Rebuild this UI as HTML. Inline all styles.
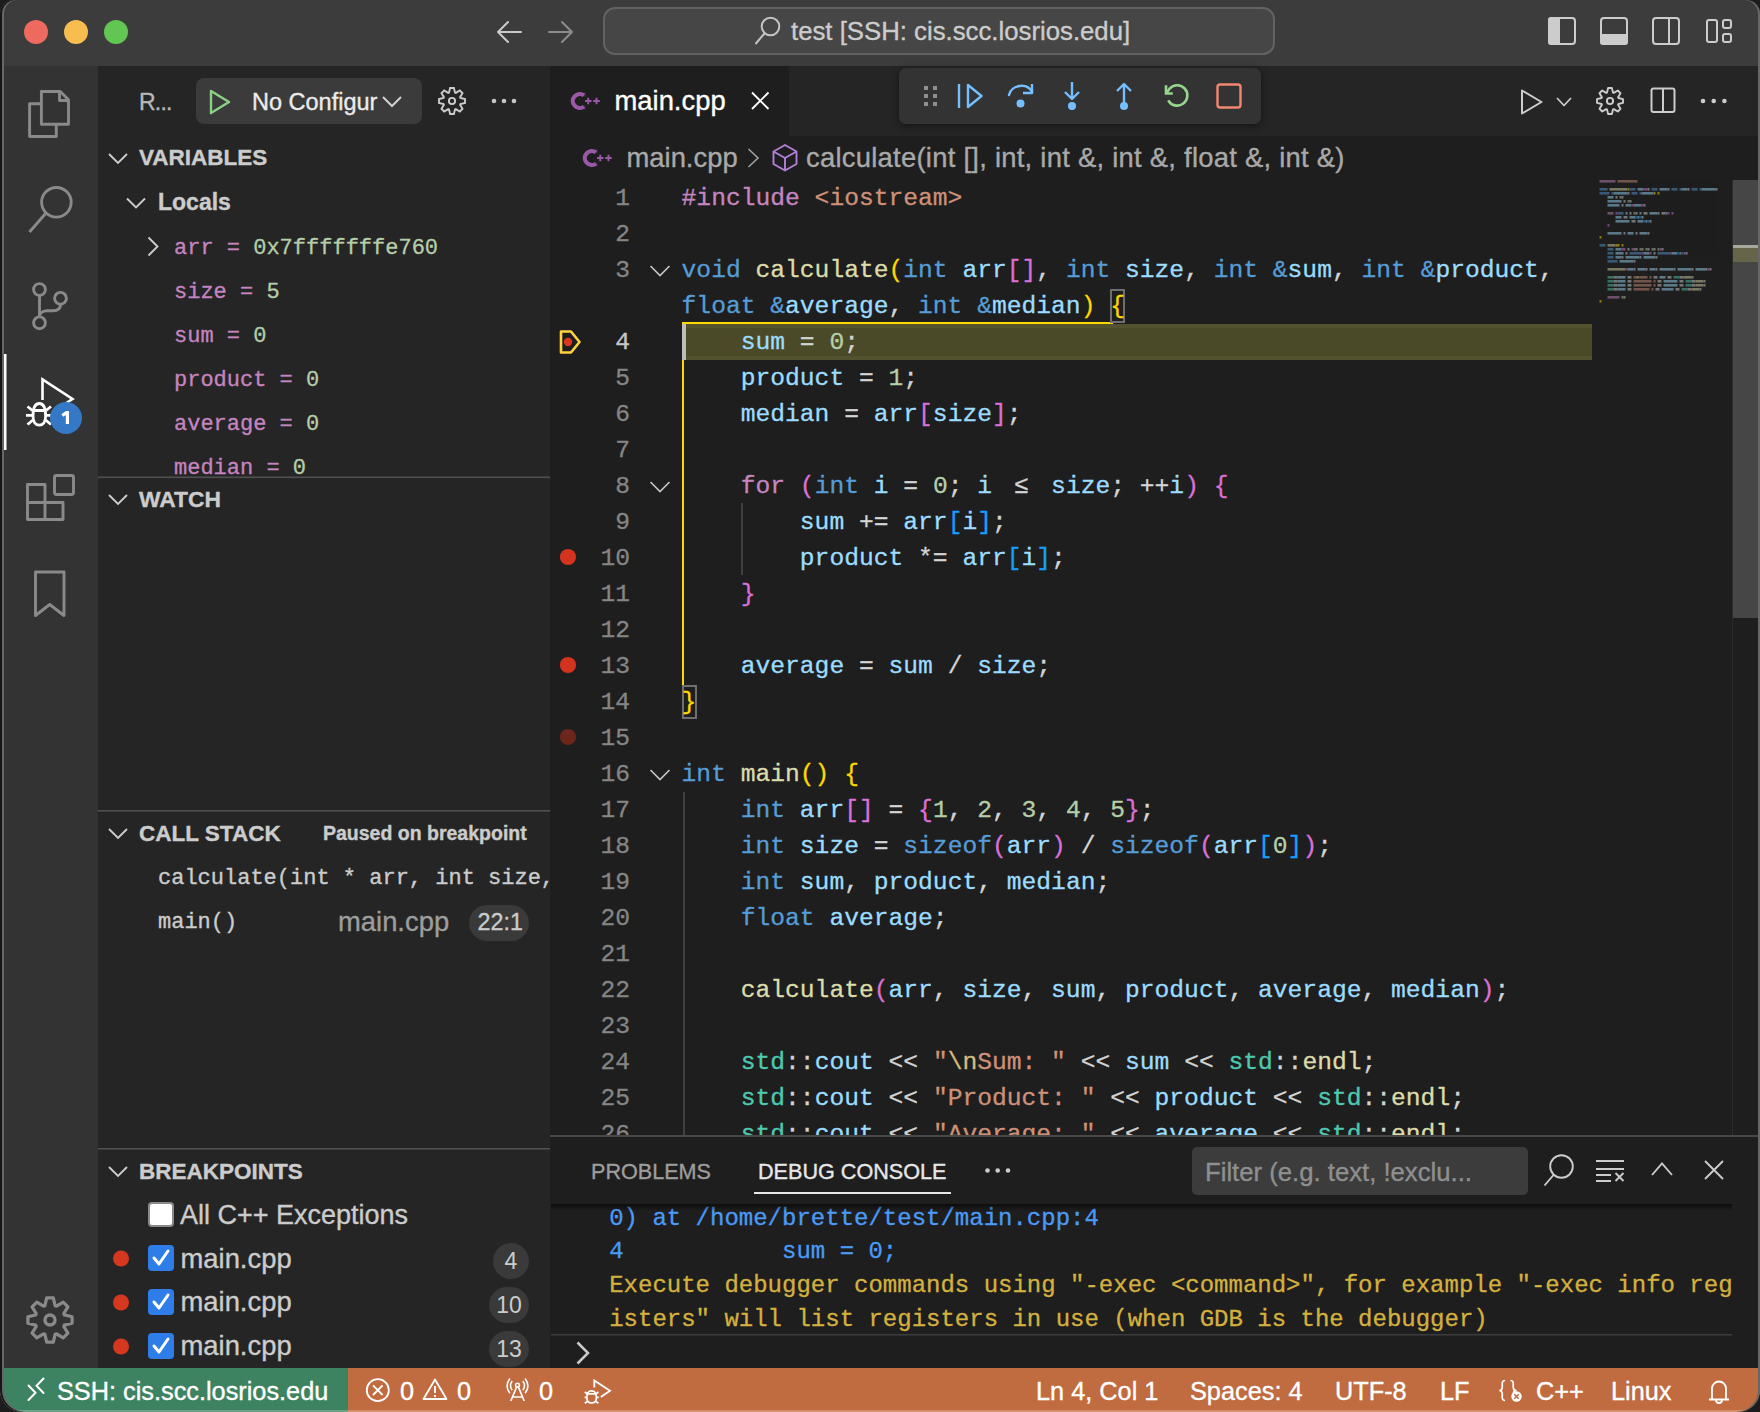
<!DOCTYPE html>
<html><head><meta charset="utf-8">
<style>
*{margin:0;padding:0;box-sizing:border-box}
html,body{width:1760px;height:1412px;overflow:hidden;background:#1c1c1c}
body{position:relative;font-family:"Liberation Sans",sans-serif;color:#cccccc}
.win{position:absolute;left:0;top:0;width:1760px;height:1412px;overflow:hidden;border-radius:14px 14px 22px 22px}
.a{position:absolute}
.mono{font-family:"Liberation Mono",monospace}
.t{position:absolute;white-space:pre;-webkit-text-stroke:0.35px currentColor}
pre{-webkit-text-stroke:0.3px currentColor}
svg{position:absolute;overflow:visible}
.code .k{color:#c586c0}.code .s{color:#ce9178}.code .ty{color:#569cd6}.code .f{color:#dcdcaa}.code .v{color:#9cdcfe}.code .n{color:#b5cea8}.code .b1{color:#ffd700}.code .b2{color:#da70d6}.code .b3{color:#179fff}.code .ns{color:#4ec9b0}.code .e{color:#d7ba7d}
.code .le{display:inline-block;width:29.56px;text-align:center}
#titlebar{left:0;top:0;width:1760px;height:66px;background:#3c3c3c}
#actbar{left:0;top:66px;width:98px;height:1302px;background:#333333}
#sidebar{left:98px;top:66px;width:452px;height:1302px;background:#252526}
#editor{left:550px;top:66px;width:1210px;height:1302px;background:#1e1e1e}
#tabs{left:550px;top:66px;width:1210px;height:70px;background:#252526}
#status{left:0;top:1368px;width:1760px;height:44px;background:#c06b40}
#remote{left:0;top:1368px;width:348px;height:44px;background:#3d8362}
.frame{position:absolute;left:0;top:0;width:1760px;height:1412px;border-radius:14px 14px 22px 22px;pointer-events:none;box-shadow:inset 2px 0 0 #161616, inset 4px 0 0 #676767, inset -2px 0 0 #676767}
</style></head>
<body>
<div class="win">
  <div id="titlebar" class="a">
    <div class="a" style="left:24px;top:20px;width:24px;height:24px;border-radius:50%;background:#ee6a5f"></div>
    <div class="a" style="left:64px;top:20px;width:24px;height:24px;border-radius:50%;background:#f5be4f"></div>
    <div class="a" style="left:104px;top:20px;width:24px;height:24px;border-radius:50%;background:#62c554"></div>
    <svg style="left:0;top:0" width="1760" height="66">
      <g fill="none" stroke-width="2" stroke-linecap="round" stroke-linejoin="round">
        <path d="M498 32 H521 M508 22 L498 32 L508 42" stroke="#c9c9c9"/>
        <path d="M549 32 H572 M562 22 L572 32 L562 42" stroke="#8c8c8c"/>
      </g>
      <rect x="604" y="8" width="670" height="46" rx="11" fill="#464646" stroke="#626262" stroke-width="2"/>
      <g fill="none" stroke="#c4c4c4" stroke-width="2">
        <circle cx="770.5" cy="26.5" r="8.8"/>
        <path d="M764.5 33.5 L755.5 44"/>
      </g>
      <g fill="none" stroke="#cccccc" stroke-width="2">
        <rect x="1549" y="18" width="26" height="26" rx="3"/>
        <rect x="1601" y="18" width="26" height="26" rx="3"/>
        <rect x="1653" y="18" width="26" height="26" rx="3"/>
        <path d="M1669 18 V44"/>
        <rect x="1707" y="20" width="10" height="22" rx="2"/>
        <rect x="1723" y="20" width="8" height="8" rx="2"/>
        <rect x="1723" y="34" width="8" height="8" rx="2"/>
      </g>
      <g fill="#cccccc">
        <path d="M1548 20 a3 3 0 0 1 3 -3 h9 v28 h-9 a3 3 0 0 1 -3 -3z"/>
        <path d="M1600 34 h28 v8 a3 3 0 0 1 -3 3 h-22 a3 3 0 0 1 -3 -3z"/>
      </g>
    </svg>
    <div class="t" style="left:791px;top:13.4px;font-size:25.75px;line-height:36px;color:#cccccc">test [SSH: cis.scc.losrios.edu]</div>
  </div>
  <div id="actbar" class="a"></div>
  <svg style="left:0;top:0" width="98" height="1368">
    <g fill="none" stroke="#8a8a8a" stroke-width="2.9" stroke-linejoin="round">
      <!-- explorer -->
      <path d="M41.4 91.5 H60.3 L68.5 99.7 V124.3 H41.4 Z"/>
      <path d="M59.5 91.5 V100.5 H68.5"/>
      <path d="M41.4 103.8 H29.6 V136.5 H56.3 V124.3"/>
      <!-- search -->
      <circle cx="56.4" cy="202.3" r="14.8"/>
      <path d="M46 213 L29.5 232" stroke-linecap="butt"/>
      <!-- source control -->
      <circle cx="39.5" cy="289.5" r="5.9"/>
      <circle cx="39.5" cy="322.8" r="5.9"/>
      <circle cx="60.5" cy="298.3" r="5.9"/>
      <path d="M39.5 295.5 V316.8"/>
      <path d="M60.5 304.2 C60.5 309 57 310.8 53 310.8 H47 C43 310.8 39.5 313 39.5 316.8"/>
      <!-- extensions -->
      <path d="M27.5 484.5 H45 V502.5 H63 V519.5 H27.5 Z M27.5 502.5 H45 V519.5"/>
      <rect x="54.5" y="475.5" width="19" height="19" rx="2"/>
      <!-- bookmark -->
      <path d="M35.5 572 H64 V615.5 L49.7 604.5 L35.5 615.5 Z"/>
      <!-- gear -->
      <path d="M44.9 1305.7 L46.7 1297.9 L53.3 1297.9 L55.1 1305.7 L56.5 1306.2 L63.2 1302.1 L67.9 1306.8 L63.8 1313.5 L64.3 1314.9 L72.1 1316.7 L72.1 1323.3 L64.3 1325.1 L63.8 1326.5 L67.9 1333.2 L63.2 1337.9 L56.5 1333.8 L55.1 1334.3 L53.3 1342.1 L46.7 1342.1 L44.9 1334.3 L43.5 1333.8 L36.8 1337.9 L32.1 1333.2 L36.2 1326.5 L35.7 1325.1 L27.9 1323.3 L27.9 1316.7 L35.7 1314.9 L36.2 1313.5 L32.1 1306.8 L36.8 1302.1 L43.5 1306.2 Z" stroke-width="3.2"/>
      <circle cx="50" cy="1320" r="5" stroke-width="3.4"/>
    </g>
    <!-- active indicator -->
    <rect x="3" y="354" width="3.5" height="96" fill="#ffffff"/>
    <!-- run & debug -->
    <g fill="none" stroke="#ffffff" stroke-width="2.6" stroke-linejoin="miter">
      <path d="M42.5 400 V379.5 L72.5 399 L60 407"/>
    </g>
    <g fill="none" stroke="#ffffff" stroke-width="2.8">
      <path d="M33 416 C33 408 35 403.5 39.3 403.5 C43.6 403.5 45.6 408 45.6 416 C45.6 422 43 425.2 39.3 425.2 C35.6 425.2 33 422 33 416 Z"/>
      <path d="M33 410.5 H45.6 M26 415.3 H32 M46.5 415.3 H51 M27.5 406.5 L32.5 410.5 M51 406.5 L46 410.5 M27.5 424.5 L33 420 M51 424.5 L45.6 420"/>
    </g>
    <circle cx="66" cy="418" r="16" fill="#3478c6"/>
    <path d="M62.3 415.5 L66.5 412.6 H67.4 V424" fill="none" stroke="#ffffff" stroke-width="3.2" stroke-linejoin="miter"/>
  </svg>
  <div id="sidebar" class="a"></div>
  <div id="sb" class="a" style="left:0;top:0;width:550px;height:1368px;overflow:hidden">
    <div class="t" style="left:139px;top:84.5px;font-size:23px;letter-spacing:-0.8px;line-height:34px;color:#b8b8b8">R...</div>
    <div class="a" style="left:196px;top:78px;width:226px;height:46px;border-radius:8px;background:#3b3b3b"></div>
    <div class="t" style="left:252px;top:84.9px;font-size:23.5px;line-height:34px;color:#ececec">No Configur</div>
    <svg style="left:0;top:0" width="550" height="1368">
      <path d="M211 91 L229 102 L211 113 Z" fill="none" stroke="#89d185" stroke-width="2.4" stroke-linejoin="round"/>
      <path d="M383 97 L392 106 L401 97" fill="none" stroke="#d0d0d0" stroke-width="2"/>
      <path d="M449.0 92.6 L450.1 88.0 L453.9 88.0 L455.0 92.6 L455.8 92.9 L459.8 90.5 L462.5 93.2 L460.1 97.2 L460.4 98.0 L465.0 99.1 L465.0 102.9 L460.4 104.0 L460.1 104.8 L462.5 108.8 L459.8 111.5 L455.8 109.1 L455.0 109.4 L453.9 114.0 L450.1 114.0 L449.0 109.4 L448.2 109.1 L444.2 111.5 L441.5 108.8 L443.9 104.8 L443.6 104.0 L439.0 102.9 L439.0 99.1 L443.6 98.0 L443.9 97.2 L441.5 93.2 L444.2 90.5 L448.2 92.9 Z" fill="none" stroke="#cccccc" stroke-width="1.9"/>
      <circle cx="452" cy="101" r="3.1" fill="none" stroke="#cccccc" stroke-width="1.9"/>
      <g fill="#c5c5c5"><circle cx="494" cy="101" r="2.3"/><circle cx="504" cy="101" r="2.3"/><circle cx="514" cy="101" r="2.3"/></g>
      <g fill="none" stroke="#cccccc" stroke-width="1.9">
        <path d="M109 154 L118 163 L127 154"/>
        <path d="M127 198.5 L136 207.5 L145 198.5"/>
        <path d="M148.5 237.5 L157.5 246.5 L148.5 255.5"/>
        <path d="M109 495 L118 504 L127 495"/>
        <path d="M109 829 L118 838 L127 829"/>
        <path d="M109 1167 L118 1176 L127 1167"/>
      </g>
      <g fill="#505050">
        <rect x="98" y="476.5" width="452" height="1.6"/>
        <rect x="98" y="810" width="452" height="1.6"/>
        <rect x="98" y="1148" width="452" height="1.6"/>
      </g>
      <g fill="#d6371f">
        <circle cx="121" cy="1258.5" r="8"/>
        <circle cx="121" cy="1302.5" r="8"/>
        <circle cx="121" cy="1346.5" r="8"/>
      </g>
    </svg>
    <div class="t" style="left:139px;top:142.4px;font-size:22.5px;line-height:32px;font-weight:bold;color:#cccccc">VARIABLES</div>
    <div class="t" style="left:158px;top:186.0px;font-size:23px;line-height:32px;font-weight:bold;color:#cccccc">Locals</div>
    <div class="mono" style="-webkit-text-stroke:0.3px currentColor;position:absolute;left:174px;top:227px;height:250px;overflow:hidden;font-size:22px;line-height:44px;white-space:pre;color:#c586c0"><span>arr = <span style="color:#b5cea8">0x7fffffffe760</span></span>
size = <span style="color:#b5cea8">5</span>
sum = <span style="color:#b5cea8">0</span>
product = <span style="color:#b5cea8">0</span>
average = <span style="color:#b5cea8">0</span>
median = <span style="color:#b5cea8">0</span></div>
    <div class="t" style="left:139px;top:483.1px;font-size:22.8px;line-height:32px;font-weight:bold;color:#cccccc">WATCH</div>
    <div class="t" style="left:139px;top:817.7px;font-size:22.5px;line-height:32px;font-weight:bold;color:#cccccc">CALL STACK</div>
    <div class="t" style="left:323px;top:819.2px;font-size:19.5px;line-height:28px;font-weight:bold;color:#cccccc">Paused on breakpoint</div>
    <div class="t mono" style="left:158px;top:857px;font-size:22px;line-height:44px;color:#cccccc">calculate(int * arr, int size, int &amp; sum</div>
    <div class="t mono" style="left:158px;top:900.5px;font-size:22px;line-height:44px;color:#cccccc">main()</div>
    <div class="t" style="left:338px;top:904.6px;font-size:27.4px;line-height:34px;color:#9d9d9d">main.cpp</div>
    <div class="a" style="left:469px;top:905px;width:60px;height:36px;border-radius:18px;background:#3a3a3a"></div>
    <div class="t" style="left:477.5px;top:905.1px;font-size:23.3px;line-height:34px;color:#cccccc">22:1</div>
    <div class="t" style="left:139px;top:1155.7px;font-size:22.5px;line-height:32px;font-weight:bold;color:#cccccc">BREAKPOINTS</div>
    <div class="a" style="left:148px;top:1202px;width:26px;height:25px;border-radius:4px;background:#ffffff;border:2px solid #8a8a8a"></div>
    <div class="t" style="left:180px;top:1198.0px;font-size:27px;line-height:34px;color:#cccccc">All C++ Exceptions</div>
    <div class="a" style="left:148px;top:1245px;width:26px;height:26px;border-radius:4px;background:#2f7de8"></div>
    <div class="a" style="left:148px;top:1289px;width:26px;height:26px;border-radius:4px;background:#2f7de8"></div>
    <div class="a" style="left:148px;top:1333px;width:26px;height:26px;border-radius:4px;background:#2f7de8"></div>
    <svg style="left:0;top:0" width="550" height="1368">
      <g fill="none" stroke="#ffffff" stroke-width="3" stroke-linecap="round" stroke-linejoin="round">
        <path d="M154 1258 L159 1264 L168 1251"/>
        <path d="M154 1302 L159 1308 L168 1295"/>
        <path d="M154 1346 L159 1352 L168 1339"/>
      </g>
    </svg>
    <div class="t" style="left:180.5px;top:1241.5px;font-size:27.4px;line-height:34px;color:#cccccc">main.cpp</div>
    <div class="t" style="left:180.5px;top:1285.4px;font-size:27.4px;line-height:34px;color:#cccccc">main.cpp</div>
    <div class="t" style="left:180.5px;top:1328.9px;font-size:27.4px;line-height:34px;color:#cccccc">main.cpp</div>
    <div class="a" style="left:493px;top:1243px;width:36px;height:36px;border-radius:18px;background:#3a3a3a;color:#cccccc;font-size:23px;line-height:36px;text-align:center">4</div>
    <div class="a" style="left:489px;top:1287px;width:40px;height:36px;border-radius:18px;background:#3a3a3a;color:#cccccc;font-size:23px;line-height:36px;text-align:center">10</div>
    <div class="a" style="left:489px;top:1331px;width:40px;height:36px;border-radius:18px;background:#3a3a3a;color:#cccccc;font-size:23px;line-height:36px;text-align:center">13</div>
  </div>
  <div id="editor" class="a"></div>
  <div id="tabs" class="a"></div>
  <div class="a" style="left:550px;top:66px;width:239px;height:70px;background:#1e1e1e"></div>
  <div class="t" style="left:614.5px;top:83.3px;font-size:27.4px;line-height:36px;color:#ffffff">main.cpp</div>
  <div class="t" style="left:626.5px;top:140.1px;font-size:27.4px;line-height:36px;color:#a9a9a9">main.cpp</div>
  <div class="t" style="left:806px;top:140.1px;font-size:27.4px;letter-spacing:0.26px;line-height:36px;color:#a9a9a9">calculate(int [], int, int &amp;, int &amp;, float &amp;, int &amp;)</div>
  <svg style="left:0;top:0" width="1760" height="200">
    <defs>
      <clipPath id="cclip"><rect x="560" y="85" width="25.2" height="30"/></clipPath>
      <g id="cpp">
        <path d="M584 95.4 A7 7 0 1 0 584 106.6" fill="none" stroke="#9b58a8" stroke-width="4.2" clip-path="url(#cclip)"/>
        <path d="M584.9 92.5 V96.5 M584.9 105.5 V109.5" stroke="#9b58a8" stroke-width="0.4"/>
        <path d="M585 101 H591.5 M588.25 97.7 V104.3 M593.2 101 H599.8 M596.5 97.7 V104.3" stroke="#9b58a8" stroke-width="1.9"/>
      </g>
    </defs>
    <use href="#cpp"/>
    <use href="#cpp" transform="translate(12 57)"/>
    <path d="M752 92.5 L768.5 109 M768.5 92.5 L752 109" stroke="#ffffff" stroke-width="1.9" fill="none"/>
    <path d="M748.5 149 L758 158 L748.5 167" stroke="#a0a0a0" stroke-width="1.6" fill="none"/>
    <g fill="none" stroke="#b180d7" stroke-width="1.9" stroke-linejoin="round">
      <path d="M785 145 L796.5 151.5 V164 L785 170.5 L773.5 164 V151.5 Z"/>
      <path d="M773.5 151.5 L785 158 L796.5 151.5 M785 158 V170.5"/>
    </g>
    <!-- right editor actions -->
    <g fill="none" stroke="#cccccc" stroke-width="2" stroke-linejoin="round">
      <path d="M1522 90.5 L1541.5 102 L1522 113.5 Z"/>
      <path d="M1557 98 L1564 105.5 L1571 98" stroke-width="1.7"/>
      <path d="M1607.0 92.6 L1608.1 88.0 L1611.9 88.0 L1613.0 92.6 L1613.8 92.9 L1617.8 90.5 L1620.5 93.2 L1618.1 97.2 L1618.4 98.0 L1623.0 99.1 L1623.0 102.9 L1618.4 104.0 L1618.1 104.8 L1620.5 108.8 L1617.8 111.5 L1613.8 109.1 L1613.0 109.4 L1611.9 114.0 L1608.1 114.0 L1607.0 109.4 L1606.2 109.1 L1602.2 111.5 L1599.5 108.8 L1601.9 104.8 L1601.6 104.0 L1597.0 102.9 L1597.0 99.1 L1601.6 98.0 L1601.9 97.2 L1599.5 93.2 L1602.2 90.5 L1606.2 92.9 Z" stroke-width="1.9"/>
      <circle cx="1610" cy="101" r="3.1" stroke-width="1.9"/>
      <rect x="1651.5" y="88.5" width="23" height="23.5" rx="2"/>
      <path d="M1663 88.5 V112"/>
    </g>
    <g fill="#cccccc"><circle cx="1703" cy="101" r="2.3"/><circle cx="1713.7" cy="101" r="2.3"/><circle cx="1724.4" cy="101" r="2.3"/></g>
  </svg>
  <!-- debug toolbar -->
  <div class="a" style="left:899px;top:68px;width:362px;height:56px;border-radius:7px;background:#333333;box-shadow:0 2px 8px rgba(0,0,0,0.45)"></div>
  <svg style="left:0;top:0" width="1760" height="200">
    <g fill="#8f8f8f">
      <rect x="924" y="86" width="4" height="4"/><rect x="933" y="86" width="4" height="4"/>
      <rect x="924" y="94" width="4" height="4"/><rect x="933" y="94" width="4" height="4"/>
      <rect x="924" y="102" width="4" height="4"/><rect x="933" y="102" width="4" height="4"/>
    </g>
    <g fill="none" stroke="#75beff" stroke-width="2.4" stroke-linejoin="round">
      <path d="M959 84 V108"/>
      <path d="M968 85 L981.5 96 L968 107 Z"/>
      <path d="M1009 95 C1011 85 1027 82 1032 92" stroke-linecap="round"/>
      <path d="M1032 84 V93 H1023"/>
      <path d="M1072 82 V99 M1065 92 L1072 99 L1079 92"/>
      <path d="M1124 104 V84 M1117 91 L1124 84 L1131 91"/>
    </g>
    <g fill="#75beff">
      <circle cx="1020.5" cy="103.5" r="4"/>
      <circle cx="1072" cy="106" r="4"/>
      <circle cx="1124" cy="106" r="4"/>
    </g>
    <g fill="none" stroke="#97d68d" stroke-width="2.4">
      <path d="M1168.2 100.3 A10.2 10.2 0 1 0 1169.6 88.6 L1166.5 93" stroke-width="2.6"/>
      <path d="M1166 85.3 V93.5 H1172.8" stroke-width="2.6" stroke-linejoin="miter"/>
    </g>
    <rect x="1217.5" y="84.5" width="23" height="23" rx="2.5" fill="none" stroke="#f48771" stroke-width="2.4"/>
  </svg>

  <!-- editor body -->
  <div class="a" style="left:682px;top:324px;width:910px;height:36px;background:#4b4a28;box-shadow:inset 0 4px 0 #53522f, inset 0 -4px 0 #53522f"></div>
  <div class="a" style="left:682px;top:324px;width:4px;height:36px;background:#bdbdbd"></div>
  <div class="a" style="left:682px;top:322px;width:431px;height:2px;background:#ffd700"></div>
  <div class="a" style="left:682px;top:360px;width:2px;height:325px;background:#ffd700"></div>
  <div class="a" style="left:741px;top:503px;width:2px;height:72px;background:#404040"></div>
  <div class="a" style="left:683px;top:792px;width:2px;height:345px;background:#404040"></div>
  <div class="a" style="left:1110px;top:289px;width:15px;height:34px;border:2px solid #6f6f6f"></div>
  <div class="a" style="left:682px;top:685px;width:15px;height:34px;border:2px solid #6f6f6f"></div>
  <pre class="mono code" style="position:absolute;left:681.6px;top:180.2px;font-size:24.63px;line-height:36px;color:#d4d4d4;margin:0"><span class="k">#include</span> <span class="s">&lt;iostream&gt;</span>

<span class="ty">void</span> <span class="f">calculate</span><span class="b1">(</span><span class="ty">int</span> <span class="v">arr</span><span class="b2">[]</span>, <span class="ty">int</span> <span class="v">size</span>, <span class="ty">int</span> <span class="ty">&amp;</span><span class="v">sum</span>, <span class="ty">int</span> <span class="ty">&amp;</span><span class="v">product</span>,
<span class="ty">float</span> <span class="ty">&amp;</span><span class="v">average</span>, <span class="ty">int</span> <span class="ty">&amp;</span><span class="v">median</span><span class="b1">)</span> <span class="b1">{</span>
    <span class="v">sum</span> = <span class="n">0</span>;
    <span class="v">product</span> = <span class="n">1</span>;
    <span class="v">median</span> = <span class="v">arr</span><span class="b2">[</span><span class="v">size</span><span class="b2">]</span>;

    <span class="k">for</span> <span class="b2">(</span><span class="ty">int</span> <span class="v">i</span> = <span class="n">0</span>; <span class="v">i</span> <span class="le">≤</span> <span class="v">size</span>; ++<span class="v">i</span><span class="b2">)</span> <span class="b2">{</span>
        <span class="v">sum</span> += <span class="v">arr</span><span class="b3">[</span><span class="v">i</span><span class="b3">]</span>;
        <span class="v">product</span> *= <span class="v">arr</span><span class="b3">[</span><span class="v">i</span><span class="b3">]</span>;
    <span class="b2">}</span>

    <span class="v">average</span> = <span class="v">sum</span> / <span class="v">size</span>;
<span class="b1">}</span>

<span class="ty">int</span> <span class="f">main</span><span class="b1">()</span> <span class="b1">{</span>
    <span class="ty">int</span> <span class="v">arr</span><span class="b2">[]</span> = <span class="b2">{</span><span class="n">1</span>, <span class="n">2</span>, <span class="n">3</span>, <span class="n">4</span>, <span class="n">5</span><span class="b2">}</span>;
    <span class="ty">int</span> <span class="v">size</span> = <span class="ty">sizeof</span><span class="b2">(</span><span class="v">arr</span><span class="b2">)</span> / <span class="ty">sizeof</span><span class="b2">(</span><span class="v">arr</span><span class="b3">[</span><span class="n">0</span><span class="b3">]</span><span class="b2">)</span>;
    <span class="ty">int</span> <span class="v">sum</span>, <span class="v">product</span>, <span class="v">median</span>;
    <span class="ty">float</span> <span class="v">average</span>;

    <span class="f">calculate</span><span class="b2">(</span><span class="v">arr</span>, <span class="v">size</span>, <span class="v">sum</span>, <span class="v">product</span>, <span class="v">average</span>, <span class="v">median</span><span class="b2">)</span>;

    <span class="ns">std</span>::<span class="v">cout</span> &lt;&lt; <span class="s">&quot;</span><span class="e">\n</span><span class="s">Sum: &quot;</span> &lt;&lt; <span class="v">sum</span> &lt;&lt; <span class="ns">std</span>::<span class="f">endl</span>;
    <span class="ns">std</span>::<span class="v">cout</span> &lt;&lt; <span class="s">&quot;Product: &quot;</span> &lt;&lt; <span class="v">product</span> &lt;&lt; <span class="ns">std</span>::<span class="f">endl</span>;
    <span class="ns">std</span>::<span class="v">cout</span> &lt;&lt; <span class="s">&quot;Average: &quot;</span> &lt;&lt; <span class="v">average</span> &lt;&lt; <span class="ns">std</span>::<span class="f">endl</span>;</pre>
  <pre class="mono" style="position:absolute;left:558px;top:180.2px;width:72px;text-align:right;font-size:24.63px;line-height:36px;color:#858585;margin:0">1
2
3

<span style="color:#c6c6c6">4</span>
5
6
7
8
9
10
11
12
13
14
15
16
17
18
19
20
21
22
23
24
25
26</pre>
  <svg style="left:0;top:0" width="1760" height="1368">
    <g fill="none" stroke="#c5c5c5" stroke-width="1.7">
      <path d="M650.5 266 L660 275.5 L669.5 266"/>
      <path d="M650.5 482 L660 491.5 L669.5 482"/>
      <path d="M650.5 770 L660 779.5 L669.5 770"/>
    </g>
    <path d="M561 331.5 H571 L579.5 342 L571 352.5 H561 Z" fill="none" stroke="#ffd33f" stroke-width="2.6" stroke-linejoin="round"/>
    <circle cx="568" cy="342" r="4.2" fill="#d8361f"/>
    <circle cx="568" cy="557" r="8.1" fill="#d4341f"/>
    <circle cx="568" cy="665" r="8.1" fill="#d4341f"/>
    <circle cx="568" cy="737" r="8.1" fill="#6c261c"/>
  </svg>
  <!-- minimap + scrollbar -->
  <svg style="left:0;top:0;opacity:0.48" width="1760" height="1368">
<rect x="1599.5" y="180.0" width="16" height="2.6" fill="#c586c0"/>
<rect x="1617.5" y="180.0" width="20" height="2.6" fill="#ce9178"/>
<rect x="1599.5" y="188.0" width="8" height="2.6" fill="#569cd6"/>
<rect x="1609.5" y="188.0" width="18" height="2.6" fill="#dcdcaa"/>
<rect x="1627.5" y="188.0" width="2" height="2.6" fill="#ffd700"/>
<rect x="1629.5" y="188.0" width="6" height="2.6" fill="#569cd6"/>
<rect x="1637.5" y="188.0" width="6" height="2.6" fill="#9cdcfe"/>
<rect x="1643.5" y="188.0" width="4" height="2.6" fill="#da70d6"/>
<rect x="1647.5" y="188.0" width="2" height="2.6" fill="#d4d4d4"/>
<rect x="1651.5" y="188.0" width="6" height="2.6" fill="#569cd6"/>
<rect x="1659.5" y="188.0" width="8" height="2.6" fill="#9cdcfe"/>
<rect x="1667.5" y="188.0" width="2" height="2.6" fill="#d4d4d4"/>
<rect x="1671.5" y="188.0" width="6" height="2.6" fill="#569cd6"/>
<rect x="1679.5" y="188.0" width="2" height="2.6" fill="#569cd6"/>
<rect x="1681.5" y="188.0" width="6" height="2.6" fill="#9cdcfe"/>
<rect x="1687.5" y="188.0" width="2" height="2.6" fill="#d4d4d4"/>
<rect x="1691.5" y="188.0" width="6" height="2.6" fill="#569cd6"/>
<rect x="1699.5" y="188.0" width="2" height="2.6" fill="#569cd6"/>
<rect x="1701.5" y="188.0" width="14" height="2.6" fill="#9cdcfe"/>
<rect x="1715.5" y="188.0" width="2" height="2.6" fill="#d4d4d4"/>
<rect x="1599.5" y="192.0" width="10" height="2.6" fill="#569cd6"/>
<rect x="1611.5" y="192.0" width="2" height="2.6" fill="#569cd6"/>
<rect x="1613.5" y="192.0" width="14" height="2.6" fill="#9cdcfe"/>
<rect x="1627.5" y="192.0" width="2" height="2.6" fill="#d4d4d4"/>
<rect x="1631.5" y="192.0" width="6" height="2.6" fill="#569cd6"/>
<rect x="1639.5" y="192.0" width="2" height="2.6" fill="#569cd6"/>
<rect x="1641.5" y="192.0" width="12" height="2.6" fill="#9cdcfe"/>
<rect x="1653.5" y="192.0" width="2" height="2.6" fill="#ffd700"/>
<rect x="1657.5" y="192.0" width="2" height="2.6" fill="#ffd700"/>
<rect x="1607.5" y="196.0" width="6" height="2.6" fill="#9cdcfe"/>
<rect x="1615.5" y="196.0" width="2" height="2.6" fill="#d4d4d4"/>
<rect x="1619.5" y="196.0" width="2" height="2.6" fill="#b5cea8"/>
<rect x="1621.5" y="196.0" width="2" height="2.6" fill="#d4d4d4"/>
<rect x="1607.5" y="200.0" width="14" height="2.6" fill="#9cdcfe"/>
<rect x="1623.5" y="200.0" width="2" height="2.6" fill="#d4d4d4"/>
<rect x="1627.5" y="200.0" width="2" height="2.6" fill="#b5cea8"/>
<rect x="1629.5" y="200.0" width="2" height="2.6" fill="#d4d4d4"/>
<rect x="1607.5" y="204.0" width="12" height="2.6" fill="#9cdcfe"/>
<rect x="1621.5" y="204.0" width="2" height="2.6" fill="#d4d4d4"/>
<rect x="1625.5" y="204.0" width="6" height="2.6" fill="#9cdcfe"/>
<rect x="1631.5" y="204.0" width="2" height="2.6" fill="#da70d6"/>
<rect x="1633.5" y="204.0" width="8" height="2.6" fill="#9cdcfe"/>
<rect x="1641.5" y="204.0" width="2" height="2.6" fill="#da70d6"/>
<rect x="1643.5" y="204.0" width="2" height="2.6" fill="#d4d4d4"/>
<rect x="1607.5" y="212.0" width="6" height="2.6" fill="#c586c0"/>
<rect x="1615.5" y="212.0" width="2" height="2.6" fill="#da70d6"/>
<rect x="1617.5" y="212.0" width="6" height="2.6" fill="#569cd6"/>
<rect x="1625.5" y="212.0" width="2" height="2.6" fill="#9cdcfe"/>
<rect x="1629.5" y="212.0" width="2" height="2.6" fill="#d4d4d4"/>
<rect x="1633.5" y="212.0" width="2" height="2.6" fill="#b5cea8"/>
<rect x="1635.5" y="212.0" width="2" height="2.6" fill="#d4d4d4"/>
<rect x="1639.5" y="212.0" width="2" height="2.6" fill="#9cdcfe"/>
<rect x="1643.5" y="212.0" width="4" height="2.6" fill="#d4d4d4"/>
<rect x="1649.5" y="212.0" width="8" height="2.6" fill="#9cdcfe"/>
<rect x="1657.5" y="212.0" width="2" height="2.6" fill="#d4d4d4"/>
<rect x="1661.5" y="212.0" width="4" height="2.6" fill="#d4d4d4"/>
<rect x="1665.5" y="212.0" width="2" height="2.6" fill="#9cdcfe"/>
<rect x="1667.5" y="212.0" width="2" height="2.6" fill="#da70d6"/>
<rect x="1671.5" y="212.0" width="2" height="2.6" fill="#da70d6"/>
<rect x="1615.5" y="216.0" width="6" height="2.6" fill="#9cdcfe"/>
<rect x="1623.5" y="216.0" width="4" height="2.6" fill="#d4d4d4"/>
<rect x="1629.5" y="216.0" width="6" height="2.6" fill="#9cdcfe"/>
<rect x="1635.5" y="216.0" width="2" height="2.6" fill="#179fff"/>
<rect x="1637.5" y="216.0" width="2" height="2.6" fill="#9cdcfe"/>
<rect x="1639.5" y="216.0" width="2" height="2.6" fill="#179fff"/>
<rect x="1641.5" y="216.0" width="2" height="2.6" fill="#d4d4d4"/>
<rect x="1615.5" y="220.0" width="14" height="2.6" fill="#9cdcfe"/>
<rect x="1631.5" y="220.0" width="4" height="2.6" fill="#d4d4d4"/>
<rect x="1637.5" y="220.0" width="6" height="2.6" fill="#9cdcfe"/>
<rect x="1643.5" y="220.0" width="2" height="2.6" fill="#179fff"/>
<rect x="1645.5" y="220.0" width="2" height="2.6" fill="#9cdcfe"/>
<rect x="1647.5" y="220.0" width="2" height="2.6" fill="#179fff"/>
<rect x="1649.5" y="220.0" width="2" height="2.6" fill="#d4d4d4"/>
<rect x="1607.5" y="224.0" width="2" height="2.6" fill="#da70d6"/>
<rect x="1607.5" y="232.0" width="14" height="2.6" fill="#9cdcfe"/>
<rect x="1623.5" y="232.0" width="2" height="2.6" fill="#d4d4d4"/>
<rect x="1627.5" y="232.0" width="6" height="2.6" fill="#9cdcfe"/>
<rect x="1635.5" y="232.0" width="2" height="2.6" fill="#d4d4d4"/>
<rect x="1639.5" y="232.0" width="8" height="2.6" fill="#9cdcfe"/>
<rect x="1647.5" y="232.0" width="2" height="2.6" fill="#d4d4d4"/>
<rect x="1599.5" y="236.0" width="2" height="2.6" fill="#ffd700"/>
<rect x="1599.5" y="244.0" width="6" height="2.6" fill="#569cd6"/>
<rect x="1607.5" y="244.0" width="8" height="2.6" fill="#dcdcaa"/>
<rect x="1615.5" y="244.0" width="4" height="2.6" fill="#ffd700"/>
<rect x="1621.5" y="244.0" width="2" height="2.6" fill="#ffd700"/>
<rect x="1607.5" y="248.0" width="6" height="2.6" fill="#569cd6"/>
<rect x="1615.5" y="248.0" width="6" height="2.6" fill="#9cdcfe"/>
<rect x="1621.5" y="248.0" width="4" height="2.6" fill="#da70d6"/>
<rect x="1627.5" y="248.0" width="2" height="2.6" fill="#d4d4d4"/>
<rect x="1631.5" y="248.0" width="2" height="2.6" fill="#da70d6"/>
<rect x="1633.5" y="248.0" width="2" height="2.6" fill="#b5cea8"/>
<rect x="1635.5" y="248.0" width="2" height="2.6" fill="#d4d4d4"/>
<rect x="1639.5" y="248.0" width="2" height="2.6" fill="#b5cea8"/>
<rect x="1641.5" y="248.0" width="2" height="2.6" fill="#d4d4d4"/>
<rect x="1645.5" y="248.0" width="2" height="2.6" fill="#b5cea8"/>
<rect x="1647.5" y="248.0" width="2" height="2.6" fill="#d4d4d4"/>
<rect x="1651.5" y="248.0" width="2" height="2.6" fill="#b5cea8"/>
<rect x="1653.5" y="248.0" width="2" height="2.6" fill="#d4d4d4"/>
<rect x="1657.5" y="248.0" width="2" height="2.6" fill="#b5cea8"/>
<rect x="1659.5" y="248.0" width="2" height="2.6" fill="#da70d6"/>
<rect x="1661.5" y="248.0" width="2" height="2.6" fill="#d4d4d4"/>
<rect x="1607.5" y="252.0" width="6" height="2.6" fill="#569cd6"/>
<rect x="1615.5" y="252.0" width="8" height="2.6" fill="#9cdcfe"/>
<rect x="1625.5" y="252.0" width="2" height="2.6" fill="#d4d4d4"/>
<rect x="1629.5" y="252.0" width="12" height="2.6" fill="#569cd6"/>
<rect x="1641.5" y="252.0" width="2" height="2.6" fill="#da70d6"/>
<rect x="1643.5" y="252.0" width="6" height="2.6" fill="#9cdcfe"/>
<rect x="1649.5" y="252.0" width="2" height="2.6" fill="#da70d6"/>
<rect x="1653.5" y="252.0" width="2" height="2.6" fill="#d4d4d4"/>
<rect x="1657.5" y="252.0" width="12" height="2.6" fill="#569cd6"/>
<rect x="1669.5" y="252.0" width="2" height="2.6" fill="#da70d6"/>
<rect x="1671.5" y="252.0" width="6" height="2.6" fill="#9cdcfe"/>
<rect x="1677.5" y="252.0" width="2" height="2.6" fill="#179fff"/>
<rect x="1679.5" y="252.0" width="2" height="2.6" fill="#b5cea8"/>
<rect x="1681.5" y="252.0" width="2" height="2.6" fill="#179fff"/>
<rect x="1683.5" y="252.0" width="2" height="2.6" fill="#da70d6"/>
<rect x="1685.5" y="252.0" width="2" height="2.6" fill="#d4d4d4"/>
<rect x="1607.5" y="256.0" width="6" height="2.6" fill="#569cd6"/>
<rect x="1615.5" y="256.0" width="6" height="2.6" fill="#9cdcfe"/>
<rect x="1621.5" y="256.0" width="2" height="2.6" fill="#d4d4d4"/>
<rect x="1625.5" y="256.0" width="14" height="2.6" fill="#9cdcfe"/>
<rect x="1639.5" y="256.0" width="2" height="2.6" fill="#d4d4d4"/>
<rect x="1643.5" y="256.0" width="12" height="2.6" fill="#9cdcfe"/>
<rect x="1655.5" y="256.0" width="2" height="2.6" fill="#d4d4d4"/>
<rect x="1607.5" y="260.0" width="10" height="2.6" fill="#569cd6"/>
<rect x="1619.5" y="260.0" width="14" height="2.6" fill="#9cdcfe"/>
<rect x="1633.5" y="260.0" width="2" height="2.6" fill="#d4d4d4"/>
<rect x="1607.5" y="268.0" width="18" height="2.6" fill="#dcdcaa"/>
<rect x="1625.5" y="268.0" width="2" height="2.6" fill="#da70d6"/>
<rect x="1627.5" y="268.0" width="6" height="2.6" fill="#9cdcfe"/>
<rect x="1633.5" y="268.0" width="2" height="2.6" fill="#d4d4d4"/>
<rect x="1637.5" y="268.0" width="8" height="2.6" fill="#9cdcfe"/>
<rect x="1645.5" y="268.0" width="2" height="2.6" fill="#d4d4d4"/>
<rect x="1649.5" y="268.0" width="6" height="2.6" fill="#9cdcfe"/>
<rect x="1655.5" y="268.0" width="2" height="2.6" fill="#d4d4d4"/>
<rect x="1659.5" y="268.0" width="14" height="2.6" fill="#9cdcfe"/>
<rect x="1673.5" y="268.0" width="2" height="2.6" fill="#d4d4d4"/>
<rect x="1677.5" y="268.0" width="14" height="2.6" fill="#9cdcfe"/>
<rect x="1691.5" y="268.0" width="2" height="2.6" fill="#d4d4d4"/>
<rect x="1695.5" y="268.0" width="12" height="2.6" fill="#9cdcfe"/>
<rect x="1707.5" y="268.0" width="2" height="2.6" fill="#da70d6"/>
<rect x="1709.5" y="268.0" width="2" height="2.6" fill="#d4d4d4"/>
<rect x="1607.5" y="276.0" width="6" height="2.6" fill="#4ec9b0"/>
<rect x="1613.5" y="276.0" width="4" height="2.6" fill="#d4d4d4"/>
<rect x="1617.5" y="276.0" width="8" height="2.6" fill="#9cdcfe"/>
<rect x="1627.5" y="276.0" width="4" height="2.6" fill="#d4d4d4"/>
<rect x="1633.5" y="276.0" width="2" height="2.6" fill="#ce9178"/>
<rect x="1635.5" y="276.0" width="4" height="2.6" fill="#d7ba7d"/>
<rect x="1639.5" y="276.0" width="8" height="2.6" fill="#ce9178"/>
<rect x="1649.5" y="276.0" width="2" height="2.6" fill="#ce9178"/>
<rect x="1653.5" y="276.0" width="4" height="2.6" fill="#d4d4d4"/>
<rect x="1659.5" y="276.0" width="6" height="2.6" fill="#9cdcfe"/>
<rect x="1667.5" y="276.0" width="4" height="2.6" fill="#d4d4d4"/>
<rect x="1673.5" y="276.0" width="6" height="2.6" fill="#4ec9b0"/>
<rect x="1679.5" y="276.0" width="4" height="2.6" fill="#d4d4d4"/>
<rect x="1683.5" y="276.0" width="8" height="2.6" fill="#dcdcaa"/>
<rect x="1691.5" y="276.0" width="2" height="2.6" fill="#d4d4d4"/>
<rect x="1607.5" y="280.0" width="6" height="2.6" fill="#4ec9b0"/>
<rect x="1613.5" y="280.0" width="4" height="2.6" fill="#d4d4d4"/>
<rect x="1617.5" y="280.0" width="8" height="2.6" fill="#9cdcfe"/>
<rect x="1627.5" y="280.0" width="4" height="2.6" fill="#d4d4d4"/>
<rect x="1633.5" y="280.0" width="18" height="2.6" fill="#ce9178"/>
<rect x="1653.5" y="280.0" width="2" height="2.6" fill="#ce9178"/>
<rect x="1657.5" y="280.0" width="4" height="2.6" fill="#d4d4d4"/>
<rect x="1663.5" y="280.0" width="14" height="2.6" fill="#9cdcfe"/>
<rect x="1679.5" y="280.0" width="4" height="2.6" fill="#d4d4d4"/>
<rect x="1685.5" y="280.0" width="6" height="2.6" fill="#4ec9b0"/>
<rect x="1691.5" y="280.0" width="4" height="2.6" fill="#d4d4d4"/>
<rect x="1695.5" y="280.0" width="8" height="2.6" fill="#dcdcaa"/>
<rect x="1703.5" y="280.0" width="2" height="2.6" fill="#d4d4d4"/>
<rect x="1607.5" y="284.0" width="6" height="2.6" fill="#4ec9b0"/>
<rect x="1613.5" y="284.0" width="4" height="2.6" fill="#d4d4d4"/>
<rect x="1617.5" y="284.0" width="8" height="2.6" fill="#9cdcfe"/>
<rect x="1627.5" y="284.0" width="4" height="2.6" fill="#d4d4d4"/>
<rect x="1633.5" y="284.0" width="18" height="2.6" fill="#ce9178"/>
<rect x="1653.5" y="284.0" width="2" height="2.6" fill="#ce9178"/>
<rect x="1657.5" y="284.0" width="4" height="2.6" fill="#d4d4d4"/>
<rect x="1663.5" y="284.0" width="14" height="2.6" fill="#9cdcfe"/>
<rect x="1679.5" y="284.0" width="4" height="2.6" fill="#d4d4d4"/>
<rect x="1685.5" y="284.0" width="6" height="2.6" fill="#4ec9b0"/>
<rect x="1691.5" y="284.0" width="4" height="2.6" fill="#d4d4d4"/>
<rect x="1695.5" y="284.0" width="8" height="2.6" fill="#dcdcaa"/>
<rect x="1703.5" y="284.0" width="2" height="2.6" fill="#d4d4d4"/>
<rect x="1607.5" y="288.0" width="6" height="2.6" fill="#4ec9b0"/>
<rect x="1613.5" y="288.0" width="4" height="2.6" fill="#d4d4d4"/>
<rect x="1617.5" y="288.0" width="8" height="2.6" fill="#9cdcfe"/>
<rect x="1627.5" y="288.0" width="4" height="2.6" fill="#d4d4d4"/>
<rect x="1633.5" y="288.0" width="16" height="2.6" fill="#ce9178"/>
<rect x="1651.5" y="288.0" width="2" height="2.6" fill="#ce9178"/>
<rect x="1655.5" y="288.0" width="4" height="2.6" fill="#d4d4d4"/>
<rect x="1661.5" y="288.0" width="12" height="2.6" fill="#9cdcfe"/>
<rect x="1675.5" y="288.0" width="4" height="2.6" fill="#d4d4d4"/>
<rect x="1681.5" y="288.0" width="6" height="2.6" fill="#4ec9b0"/>
<rect x="1687.5" y="288.0" width="4" height="2.6" fill="#d4d4d4"/>
<rect x="1691.5" y="288.0" width="8" height="2.6" fill="#dcdcaa"/>
<rect x="1699.5" y="288.0" width="2" height="2.6" fill="#d4d4d4"/>
<rect x="1607.5" y="296.0" width="12" height="2.6" fill="#c586c0"/>
<rect x="1621.5" y="296.0" width="2" height="2.6" fill="#b5cea8"/>
<rect x="1623.5" y="296.0" width="2" height="2.6" fill="#d4d4d4"/>
<rect x="1599.5" y="300.0" width="2" height="2.6" fill="#ffd700"/>
  </svg>
  <div class="a" style="left:1732px;top:180px;width:28px;height:438px;background:#464646"></div>
  <div class="a" style="left:1732px;top:180px;width:1px;height:956px;background:#2b2b2b"></div>
  <div class="a" style="left:1733px;top:244.5px;width:27px;height:3.5px;background:#a8a89a"></div>
  <div class="a" style="left:1733px;top:248px;width:27px;height:14px;background:#66654a"></div>

  <!-- panel -->
  <div class="a" style="left:550px;top:1135px;width:1210px;height:233px;background:#1e1e1e;border-top:2px solid #474747"></div>
  <div class="t" style="left:591px;top:1155.5px;font-size:21.6px;line-height:32px;color:#9d9d9d">PROBLEMS</div>
  <div class="t" style="left:758px;top:1155.5px;font-size:21.6px;line-height:32px;color:#e7e7e7">DEBUG CONSOLE</div>
  <div class="a" style="left:754px;top:1192px;width:197px;height:2px;background:#e7e7e7"></div>
  <div class="a" style="left:1192px;top:1147px;width:336px;height:48px;border-radius:5px;background:#3c3c3c"></div>
  <div class="t" style="left:1205px;top:1154.6px;font-size:25.7px;line-height:34px;color:#8f8f8f">Filter (e.g. text, !exclu...</div>
  <svg style="left:0;top:0" width="1760" height="1412">
    <g fill="#cccccc"><circle cx="987.5" cy="1170.5" r="2.3"/><circle cx="997.7" cy="1170.5" r="2.3"/><circle cx="1008" cy="1170.5" r="2.3"/></g>
    <g fill="none" stroke="#cccccc" stroke-width="1.9">
      <circle cx="1561.5" cy="1166.5" r="11.3"/>
      <path d="M1553.5 1175 L1544.5 1185.5"/>
      <path d="M1596 1161 H1624 M1596 1169 H1624 M1596 1175 H1611 M1596 1181 H1611"/>
      <path d="M1615.5 1173 L1623.5 1181 M1623.5 1173 L1615.5 1181"/>
      <path d="M1652 1175 L1662 1163.5 L1672 1175"/>
      <path d="M1705 1161 L1723 1179 M1723 1161 L1705 1179"/>
    </g>
    <rect x="551" y="1334" width="1181" height="1.5" fill="#3c3c3c"/>
    <path d="M577.5 1342.5 L588 1353 L577.5 1363.5" fill="none" stroke="#cccccc" stroke-width="2.5"/>
  </svg>
  <pre class="mono" style="position:absolute;left:609.2px;top:1201.8px;font-size:24px;line-height:33.6px;color:#4a9af6;margin:0">0) at /home/brette/test/main.cpp:4
4           sum = 0;
<span style="color:#d4b13f">Execute debugger commands using "-exec &lt;command&gt;", for example "-exec info reg
isters" will list registers in use (when GDB is the debugger)</span></pre>
  <div class="a" style="left:551px;top:1204px;width:1181px;height:7px;background:linear-gradient(rgba(0,0,0,0.6),rgba(0,0,0,0))"></div>

  <div id="status" class="a"></div>
  <div id="remote" class="a"></div>
  <div class="a" style="left:0;top:1410px;width:1760px;height:2px;background:rgba(255,255,255,0.25)"></div>
  <svg style="left:0;top:0" width="1760" height="1412">
    <g fill="none" stroke="#ffffff" stroke-width="2" stroke-linecap="round">
      <path d="M28.5 1385.5 L35.5 1392.8 L28.5 1400"/>
      <path d="M43.5 1378.5 L36.5 1385.8 L43.5 1393"/>
    </g>
    <g fill="none" stroke="#ffffff" stroke-width="1.8">
      <circle cx="377.8" cy="1390.2" r="11"/>
      <path d="M373 1385.4 L382.6 1395 M382.6 1385.4 L373 1395"/>
      <path d="M435 1379.5 L446.5 1399 H423.5 Z" stroke-linejoin="round"/>
      <path d="M435 1386 V1393 M435 1395 V1397"/>
      <circle cx="517.5" cy="1385.2" r="1.9" stroke-width="1.6"/>
      <path d="M516.6 1387 L510.8 1401 M518.4 1387 L524.2 1401 M513 1397 H522" stroke-width="1.7"/>
      <path d="M512.2 1381 Q508.8 1385.6 512.2 1390.3 M522.8 1381 Q526.2 1385.6 522.8 1390.3" stroke-width="1.6"/>
      <path d="M509.9 1378.5 Q504.3 1385.9 509.9 1393.3 M525.1 1378.5 Q530.7 1385.9 525.1 1393.3" stroke-width="1.6"/>
      <path d="M594.3 1387.5 V1380.5 L610 1390.7 L600.8 1397" stroke-linejoin="miter"/>
      <path d="M586.8 1397.5 C586.8 1393 588.5 1390.8 591.6 1390.8 C594.7 1390.8 596.4 1393 596.4 1397.5 C596.4 1401 594.5 1403 591.6 1403 C588.7 1403 586.8 1401 586.8 1397.5 Z" stroke-width="1.7"/>
      <path d="M586.8 1393.8 H596.4 M584.6 1397.4 H586.8 M596.4 1397.4 H598.8 M584.8 1392 L587.5 1394 M598.4 1392 L595.7 1394 M584.8 1403.3 L587.6 1401.2 M598.4 1403.3 L595.6 1401.2" stroke-width="1.7"/>
      <path d="M1712 1399 V1388.5 A7 7 0 0 1 1726 1388.5 V1399" />
      <path d="M1709 1399.5 H1729"/>
      <path d="M1716 1400 A3 3 0 0 0 1722 1400"/>
      <path d="M1505 1380.5 C1501.5 1380.5 1502.3 1384 1502.3 1386.5 C1502.3 1389 1501.5 1390.5 1499.3 1390.5 C1501.5 1390.5 1502.3 1392 1502.3 1394.5 C1502.3 1397 1501.5 1400.5 1505 1400.5" stroke-width="1.7"/>
      <path d="M1510.5 1380.5 C1514 1380.5 1513.2 1384 1513.2 1386.5 C1513.2 1389 1514 1390.5 1516.5 1390.5 C1514.5 1390.5 1513.5 1391.5 1513.5 1393" stroke-width="1.7"/>
    </g>
    <circle cx="1516.5" cy="1396.5" r="5.2" fill="#ffffff"/>
    <path d="M1514.3 1394.3 L1518.7 1398.7 M1518.7 1394.3 L1514.3 1398.7" stroke="#c06b40" stroke-width="1.5"/>
  </svg>
  <div class="t" style="left:57px;top:1374.2px;font-size:25.3px;line-height:34px;color:#ffffff">SSH: cis.scc.losrios.edu</div>
  <div class="t" style="left:400px;top:1374.2px;font-size:25.3px;line-height:34px;color:#ffffff">0</div>
  <div class="t" style="left:457px;top:1374.2px;font-size:25.3px;line-height:34px;color:#ffffff">0</div>
  <div class="t" style="left:539px;top:1374.2px;font-size:25.3px;line-height:34px;color:#ffffff">0</div>
  <div class="t" style="left:1036px;top:1374.2px;font-size:25.3px;line-height:34px;color:#ffffff">Ln 4, Col 1</div>
  <div class="t" style="left:1190px;top:1374.2px;font-size:25.3px;line-height:34px;color:#ffffff">Spaces: 4</div>
  <div class="t" style="left:1335px;top:1374.2px;font-size:25.3px;line-height:34px;color:#ffffff">UTF-8</div>
  <div class="t" style="left:1440px;top:1374.2px;font-size:25.3px;line-height:34px;color:#ffffff">LF</div>
  <div class="t" style="left:1536px;top:1374.2px;font-size:25.3px;line-height:34px;color:#ffffff">C++</div>
  <div class="t" style="left:1611px;top:1374.2px;font-size:25.3px;line-height:34px;color:#ffffff">Linux</div>
</div>
<div class="frame"></div>
</body></html>
